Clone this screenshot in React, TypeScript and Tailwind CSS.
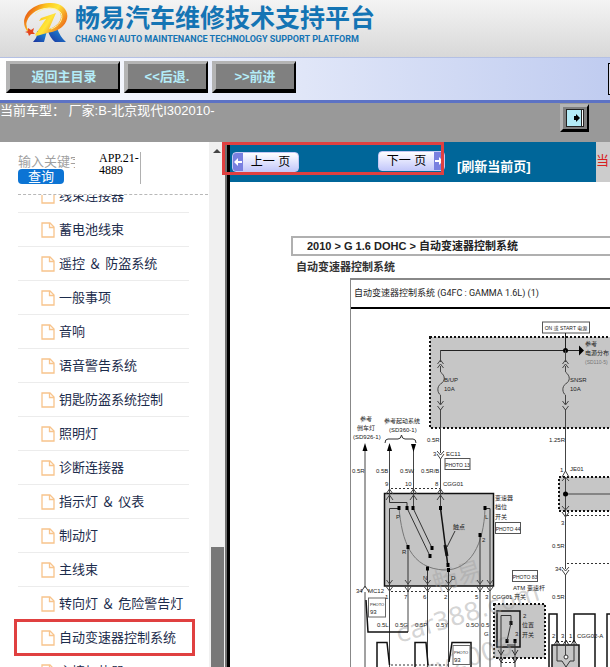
import { FC, ReactNode } from "react";
import { clsx } from "clsx";

const menuItems = [
  "线束连接器",
  "蓄电池线束",
  "遥控 ＆ 防盗系统",
  "一般事项",
  "音响",
  "语音警告系统",
  "钥匙防盗系统控制",
  "照明灯",
  "诊断连接器",
  "指示灯 ＆ 仪表",
  "制动灯",
  "主线束",
  "转向灯 ＆ 危险警告灯",
  "自动变速器控制系统",
  "主接加热器",
];

const activeItem = "自动变速器控制系统";

const Logo: FC = () => (
  <svg className="h-[44px] w-[48px] shrink-0" viewBox="0 0 48 44">
    <defs>
      <linearGradient id="flame" x1="0" y1="0.2" x2="1" y2="0.7">
        <stop offset="0" stopColor="#e23a12" />
        <stop offset="0.35" stopColor="#fcc51c" />
        <stop offset="0.6" stopColor="#ffe63a" />
        <stop offset="1" stopColor="#ea5a10" />
      </linearGradient>
      <linearGradient id="leg" x1="0" y1="1" x2="1" y2="0">
        <stop offset="0" stopColor="#1a2f9c" />
        <stop offset="1" stopColor="#1e9be0" />
      </linearGradient>
    </defs>
    <path d="M15 31 L25 31 L22 42 L11 42 Q16 37 15 31 Z" fill="url(#leg)" />
    <path d="M26 31 L35 28 Q38 37 44 42 L33 42 Q28 38 26 31 Z" fill="url(#leg)" />
    <path
      d="M5 31 C-3 20 6 4 27 3 C45 2 50 17 41 26 C36 31 30 32 25 33 L18 35 C13 37 12 35 15 32 L24 19 L17 21 L19 18 L34 13 L27 29 C39 25 43 14 34 9 C24 5 9 10 5 21 Q3 26 7 31 Z"
      fill="url(#flame)"
    />
    <path d="M13 14 C20 7 34 6 39 13 C42 19 37 26 29 29" fill="none" stroke="#fff2a0" strokeWidth="1" />
    <path d="M6 28 L9 30 L12 28 L11 32 L13 34 L9 34 L7 36 L6 33 L3 32 L6 31 Z" fill="#e4451c" />
  </svg>
);

const BevelButton: FC<{ className?: string; children: ReactNode }> = ({
  className,
  children,
}) => (
  <button
    className={clsx(
      "flex h-8 items-center justify-center border-t-3 border-r-2 border-b-4 border-l-4 border-t-[#b4b4b4] border-r-black border-b-black border-l-[#b4b4b4] bg-[#808080] text-[13px] font-bold text-[#b4ecf8]",
      className
    )}
  >
    {children}
  </button>
);

const FileIcon: FC = () => (
  <svg className="h-4 w-[14px] shrink-0" viewBox="0 0 14 16" fill="none" stroke="#f8c48c" strokeWidth="1.3">
    <path d="M1 1 H9 L13 5 V15 H1 Z" />
    <path d="M8.5 1 V5.5 H13" />
  </svg>
);

const PageButton: FC<{ label: string; next?: boolean }> = ({ label, next }) => (
  <button
    className={clsx(
      "flex h-5 w-[67px] items-stretch overflow-hidden rounded-sm border border-[#c4c8f4] bg-linear-to-b from-white to-[#c4c8fa] text-[12px] leading-[18px] text-black",
      next && "flex-row-reverse"
    )}
  >
    <span className="flex w-[10px] shrink-0 items-center justify-center bg-[#7880e0]">
      <svg className={clsx("h-2 w-2", next && "rotate-180")} viewBox="0 0 8 8" fill="#fff">
        <path d="M0 4 L4 0 V3 H8 V5 H4 V8 Z" />
      </svg>
    </span>
    <span className="grow text-center whitespace-nowrap">{label}</span>
  </button>
);

const Sidebar: FC = () => (
  <aside className="flex w-[209px] shrink-0 flex-col bg-white">
    <div className="mr-px ml-[18px] flex h-[53px] shrink-0 border-b border-dashed border-[#b8b8b8] pt-2">
      <form className="w-[57px] pt-1">
        <input
          aria-label="关键字"
          placeholder="输入关键字"
          className="block h-[15px] w-full text-[13px] leading-[15px] placeholder:text-[#a0a0a0]"
        />
        <button
          type="button"
          className="block h-[15px] w-[46px] rounded-sm bg-[#0c74d4] text-[13px] leading-[15px] text-white"
        >
          查询
        </button>
      </form>
      <p className="mt-[2px] ml-6 h-8 w-[42px] border-r border-[#b0b0b0] font-['Liberation_Serif',serif] text-[12px] leading-3 text-black">
        APP.21-
        <br />
        4889
      </p>
    </div>
    <ul className="-mt-4 min-h-0 grow overflow-hidden pr-5 pl-[18px] [clip-path:inset(16px_0_0_-8px)]">
      {menuItems.map((item) => (
        <li
          key={item}
          className="relative flex h-[34px] items-center border-b border-[#ececec] pl-[23px]"
        >
          <FileIcon />
          <a href="#" className="ml-1 text-[13px] whitespace-nowrap text-[#1c2c4c]">
            {item}
          </a>
          {item === activeItem && (
            <span className="pointer-events-none absolute -top-[2px] -right-[6px] -left-1 h-[37px] border-3 border-[#e04040]" />
          )}
        </li>
      ))}
    </ul>
  </aside>
);

const Fuse: FC<{ x: number }> = ({ x }) => (
  <g transform={`translate(${x} 350)`} fill="none" stroke="#444">
    <path d="M0 0 V12 M0 16 V22 C5 26 5 31 0 34 C-4 37 -3 43 0 45 V54 M0 59 V78" />
    <path d="M-3 14 L0 10 L3 14 M-3 18 L0 14 L3 18 M-3 51 L0 55 L3 51 M-3 56 L0 60 L3 56" />
  </g>
);

const Label: FC<{ x: number; y: number; fill?: string; children: ReactNode }> = ({
  x,
  y,
  fill = "#222",
  children,
}) => (
  <text x={x} y={y} fill={fill}>
    {children}
  </text>
);

const PhotoTag: FC<{ x: number; y: number; num: number }> = ({ x, y, num }) => (
  <g>
    <rect x={x} y={y} width="25" height="11" fill="#fff" stroke="#555" />
    <text x={x + 12.5} y={y + 8} fill="#222" fontSize="5" textAnchor="middle">
      PHOTO {num}
    </text>
  </g>
);

const wireLabels: [number, number, string][] = [
  [444, 382, "B/UP"],
  [444, 391, "10A"],
  [570, 382, "SNSR"],
  [570, 391, "10A"],
  [352, 473, "0.5R"],
  [376, 473, "0.5B"],
  [400, 473, "0.5W"],
  [421, 473, "0.5R/B"],
  [427, 442, "0.5R"],
  [433, 456, "3"],
  [446, 456, "EC11"],
  [385, 486, "9"],
  [405, 486, "10"],
  [435, 486, "8"],
  [443, 486, "CGG01"],
  [549, 442, "1.25R"],
  [560, 472, "1"],
  [570, 471, "JE01"],
  [561, 525, "3"],
  [552, 548, "0.5R"],
  [555, 571, "34"],
  [552, 599, "0.5R"],
  [396, 519, "P"],
  [402, 554, "R"],
  [423, 580, "N"],
  [451, 580, "D"],
  [482, 542, "2"],
  [485, 519, "L"],
  [385, 599, "1"],
  [404, 599, "7"],
  [423, 599, "6"],
  [444, 599, "2"],
  [475, 599, "5"],
  [485, 599, "3"],
  [492, 599, "CGG01"],
  [356, 593, "34"],
  [368, 593, "MC12"],
  [377, 627, "0.5L"],
  [395, 627, "0.5G"],
  [415, 627, "0.5P"],
  [436, 627, "0.5Y"],
  [466, 627, "0.5O"],
  [481, 627, "0.5"],
  [484, 636, "G"],
  [523, 618, "2"],
  [515, 636, "3"],
  [552, 638, "2"],
  [561, 638, "3"],
  [569, 638, "1"],
  [577, 638, "CGG02-A"],
];

const pins = [389.5, 408, 427.5, 448.5, 480, 490];

const dots = [
  [399, 508],
  [407, 508],
  [413, 508],
  [440.5, 508],
  [485, 508],
  [408, 547],
  [427.5, 568.5],
  [448.5, 570],
  [480, 535],
  [430, 556],
  [432, 548],
  [448, 565],
  [511, 623],
  [507, 641],
  [515, 641],
];

// wiring diagram sheet, drawn in window coordinates
const WiringDiagram: FC = () => (
  <svg
    className="block h-[358px] w-[259px] shrink-0 font-['Liberation_Sans','Noto_Sans_CJK_SC',sans-serif] text-[6px]"
    viewBox="351 309 259 358"
  >
    <g fill="#c6c6c6" stroke="#111" strokeWidth="2" strokeDasharray="2 2">
      <rect x="430" y="337" width="190" height="91" />
      <rect x="559" y="477" width="60" height="34" />
      <rect x="494" y="604" width="51" height="54" />
    </g>
    <rect x="384.5" y="493.5" width="109" height="92.5" fill="#c4c4c4" stroke="#111" strokeWidth="1.5" />
    <rect x="497" y="611" width="23" height="36" fill="#c4c4c4" stroke="#111" strokeWidth="1.5" />
    <rect x="552" y="645" width="27" height="30" fill="#c6c6c6" stroke="#111" strokeWidth="1.5" />

    <g fill="#a0a0a0" fillOpacity="0.45" fontSize="25" className="font-['DejaVu_Sans','Noto_Sans_CJK_SC',sans-serif]">
      <text transform="translate(399 643) rotate(-17)">car388.com</text>
      <text transform="translate(426 680) rotate(-17)">cy2006</text>
      <text transform="translate(436 592) rotate(-17)">畅易</text>
    </g>

    <rect x="542.5" y="322" width="47" height="11" fill="#fff" stroke="#555" />
    <text x="566" y="330" fontSize="5" fill="#222" textAnchor="middle">ON 或 START 电源</text>
    <path d="M440.5 350.5 H580 M565.5 333 V351" stroke="#222" fill="none" />
    <circle cx="565.5" cy="350.5" r="2.5" />
    <path d="M579 345.500 L584 350.5 L579 355.500 Z" />
    <Fuse x={440.5} />
    <Fuse x={565.5} />
    <Label x={585} y={346}>参考</Label>
    <Label x={585} y={355}>电源分布</Label>
    <text x="585" y="364" fontSize="5" fill="#777">(SD110-5)</text>

    <Label x={360} y={421}>参考</Label>
    <Label x={357} y={430}>倒车灯</Label>
    <Label x={353} y={439}>(SD926-1)</Label>
    <Label x={384} y={423}>参考起动系统</Label>
    <Label x={389} y={432}>(SD360-1)</Label>
    <path d="M385 443 Q385 439 388 439 H398 Q401 439 401.500 435 Q402 439 405 439 H413 Q416 439 416 443" fill="none" stroke="#333" />

    {/* wires above the switch */}
    <g fill="none" stroke="#444">
      <path d="M365 448 V588 M389.5 448 V497 M413.5 444 V508 M440.5 428 V453 M440.5 459 V508" />
      <path d="M565.5 428 V471 M565.5 477 V569 M565.5 575 V657 M566 494 H610" />
      <path d="M437 451 L440.5 455 L444 451 M437 454 L440.5 459 L444 454" />
      <path d="M562 567 L565.5 571 L569 567 M562 570 L565.5 575 L569 570" />
      <path d="M562 477 L565.5 471 L569 477 M562 481 L565.5 477 L569 481 M562 506 L565.5 510 L569 506 M562 512 L565.5 517 L569 512" />
      <path d="M386 494 L389.5 489 L393 494 M410 494 L413.5 489 L417 494 M437 494 L440.5 489 L444 494" />
      <path d="M386 500 L389.5 495 L393 500 M410 500 L413.5 495 L417 500 M437 500 L440.5 495 L444 500" />
    </g>
    <path d="M365 443 L367.500 451 H362.500 Z M389.5 443 L392 451 H387 Z M413.5 452 L416 444 H411 Z" />
    <circle cx="565.5" cy="494" r="2.5" />
    <g fill="none" stroke="#333" strokeDasharray="2 2">
      <path d="M391 488.5 H440 M567 515.5 H610 M567 563.5 H610 M391 591.5 H490 M391 665 H448 M557 641.5 H574 M501 662.5 H515" />
    </g>

    {/* range switch */}
    <g fill="none" stroke="#333">
      <path d="M389.5 497 V502.5 H407 V508 M399 508.5 H389.5 V586 M485 508.5 H490 V586" />
      <path d="M407 508 L430 556 M413 508 L432 548 M455 531 L447 547" />
      <path d="M399 508 C402 540 410 569 445 570 C470 570 484 545 485 508" stroke="#777" />
      <path d="M408 547 V586 M427.5 568 V586 M448.5 570 V586 M480 535 V586" />
    </g>
    <path d="M440.5 508 L448 567" stroke="#111" strokeWidth="1.5" />
    <path d="M445 545 L447 556" stroke="#111" strokeWidth="3" />
    {dots.map(([x, y]) => (
      <rect key={`${x}-${y}`} x={x - 1.5} y={y - 2} width="3" height="4" />
    ))}
    <Label x={453} y={529}>触点</Label>

    {pins.map((x) => (
      <g key={x} transform={`translate(${x} 586)`} fill="none" stroke="#444">
        <path d="M-3 -6 L0 -2 L3 -6 M-3 1 L0 5 L3 1" />
        <path d={x === 408 ? "M0 0 V46" : "M0 0 V81"} />
      </g>
    ))}
    <path d="M361 592 L365 586 L369 592 M365 592 V667" fill="none" stroke="#444" />
    <path
      d="M366 600 L368 632 H408 M377 667 V642.5 H387 L389.5 665 M415 667 V642.5 H426 L428 665 M471 667 V642.5 H452 L449 662"
      fill="none"
      stroke="#111"
      strokeWidth="1.5"
    />
    <rect x="368.5" y="598" width="17" height="19" fill="#fff" stroke="#666" />
    <text x="370" y="606" fontSize="4" fill="#222">PHOTO</text>
    <Label x={370} y={614}>93</Label>
    <rect x="453" y="645.5" width="17" height="19" fill="#fff" stroke="#666" />
    <text x="454" y="654" fontSize="4" fill="#222">PHOTO</text>
    <Label x={454} y={662}>93</Label>

    <Label x={495} y={500}>变速器</Label>
    <Label x={495} y={509}>档位</Label>
    <Label x={495} y={519}>开关</Label>
    <PhotoTag x={445} y={458.5} num={13} />
    <PhotoTag x={495.5} y={522.5} num={44} />
    <PhotoTag x={512.5} y={570.5} num={83} />
    <Label x={513} y={590}>ATM 变速杆</Label>
    <Label x={514} y={599}>开关</Label>
    <Label x={522} y={627}>位置</Label>
    <Label x={522} y={637}>开关</Label>

    {/* shift lever switch */}
    <g fill="none" stroke="#333">
      <path d="M511 623 V615.500 H501 V667 M511 623 L507 641 M507 645 H515 M515 641 V667" />
      <path d="M498 650 L501 655 L504 650 M498 657 L501 662 L504 657 M512 650 L515 655 L518 650 M512 657 L515 662 L518 657" />
      <path d="M557 642 V661 H562 L566 667 L570 661 H574 V642" />
      <circle cx="566" cy="657" r="2" fill="#fff" />
      <path d="M554 645 L557 640 L560 645 M563 645 L566 640 L569 645 M571 645 L574 640 L577 645" />
    </g>
    <path
      d="M549 667 V614 H557 V642 M574 642 V614 H595 V667 M607 667 V614 H610"
      fill="none"
      stroke="#111"
      strokeWidth="1.5"
    />
    {wireLabels.map(([x, y, text]) => (
      <Label key={`${x}-${y}`} x={x} y={y}>
        {text}
      </Label>
    ))}
  </svg>
);

const Viewer: FC = () => (
  <main className="relative flex min-w-0 grow flex-col bg-white">
    <div className="flex h-10 shrink-0">
      <div className="flex grow items-start bg-[#006699] pl-[2px]">
        <div className="mt-[10px] mr-[79px]">
          <PageButton label="上一 页" />
        </div>
        <div className="mt-[9px]">
          <PageButton label="下一 页" next />
        </div>
        <a href="#" className="mt-4 ml-3 text-[13px] leading-[18px] font-bold whitespace-nowrap text-white">
          [刷新当前页]
        </a>
      </div>
      <p className="w-[14px] shrink-0 overflow-hidden bg-[#ccc] pt-[10px] text-[13px] leading-[18px] whitespace-nowrap text-[#d82020]">
        当
      </p>
    </div>
    <span className="pointer-events-none absolute top-0 -left-2 h-[33px] w-[222px] border-3 border-[#e04040]" />
    <div className="mt-[54px] ml-[61px] shrink-0 border-2 border-r-0 border-[#b0b0b0] pl-[14px] text-[11px] leading-4 font-bold whitespace-nowrap text-[#222]">
      2010 &gt; G 1.6 DOHC &gt; 自动变速器控制系统
    </div>
    <h2 className="ml-[66px] h-[22px] shrink-0 text-[11px] leading-[22px] font-bold whitespace-nowrap text-[#333]">
      自动变速器控制系统
    </h2>
    <section className="ml-[120px] min-h-0 grow overflow-hidden border-t-2 border-l border-[#888]">
      <h3 className="h-[29px] border-b-2 border-black pl-[3px] font-[Roboto,'Noto_Sans_CJK_SC',sans-serif] text-[9px] leading-[27px] whitespace-nowrap text-[#222]">
        自动变速器控制系统 (G4FC : GAMMA 1.6L) (1)
      </h3>
      <WiringDiagram />
    </section>
  </main>
);

const App: FC = () => (
  <div className="flex h-screen flex-col overflow-hidden bg-white font-['Liberation_Sans','Noto_Sans_CJK_SC',sans-serif]">
    <header className="flex h-[57px] shrink-0 bg-linear-to-b from-[#f4f4f4] to-[#d8d8d8] pl-[22px]">
      <Logo />
      <div className="ml-[5px] pt-1 font-bold whitespace-nowrap text-[#1474b4]">
        <h1 className="text-[25px] leading-[29px]">畅易汽车维修技术支持平台</h1>
        <p className="font-[Roboto,sans-serif] text-[9px] leading-[13px]">
          CHANG YI AUTO MAINTENANCE TECHNOLOGY SUPPORT PLATFORM
        </p>
      </div>
    </header>

    <nav className="flex h-[46px] shrink-0 gap-1 border-t border-b-3 border-t-[#b4c0e4] border-b-[#5c72c4] bg-linear-to-r from-white via-[#e0e6f8] to-[#c0ccf0] pt-[3px] pl-[6px]">
      <BevelButton className="w-[114px]">返回主目录</BevelButton>
      <BevelButton className="w-[84px]">&lt;&lt;后退.</BevelButton>
      <BevelButton className="w-[84px]">&gt;&gt;前进</BevelButton>
      <input
        aria-label="车型"
        className="mt-[2px] -mr-[78px] ml-auto h-8 w-20 shrink-0 border border-black bg-[#d8d8e8]"
      />
    </nav>

    <div className="flex h-[39px] shrink-0 items-start justify-between bg-[#999] pr-[21px]">
      <p className="text-[13px] leading-4 text-white">
        当前车型： 厂家:B-北京现代I302010-
      </p>
      <button
        aria-label="前进"
        className="mt-px flex h-7 w-[29px] items-center justify-center border-t-3 border-r-2 border-b-3 border-l-3 border-t-[#b4b4b4] border-r-black border-b-black border-l-[#b4b4b4] bg-[#808080]"
      >
        <svg className="h-[18px] w-[18px]" viewBox="0 0 18 18">
          <rect x="0.5" y="0.5" width="17" height="17" fill="#b4ecf8" stroke="#222" />
          <rect x="15" y="1" width="2" height="16" fill="#fff" />
          <path d="M15.5 1 V17" stroke="#222" />
          <path d="M8 7 H10 V5 L14 9 L10 13 V11 H8 Z" />
        </svg>
      </button>
    </div>

    <div className="flex min-h-0 grow">
      <Sidebar />
      <div className="flex w-[15px] shrink-0 flex-col items-end bg-[#f0f0f0] pt-[7px]">
        <span className="mr-[3px] border-x-4 border-b-4 border-x-transparent border-b-[#444]" />
        <span className="mt-auto h-[120px] w-[13px] bg-[#787878]" />
      </div>
      <div className="w-[6px] shrink-0 border-r-3 border-l border-r-black border-l-[#f0f0f0] bg-[#707070]" />
      <Viewer />
    </div>
  </div>
);

export default App;
